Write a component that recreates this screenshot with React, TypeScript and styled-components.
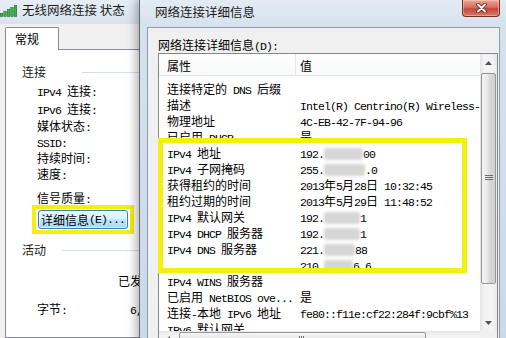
import React from "react";
import styled, { createGlobalStyle } from "styled-components";

const HAN = /[\u3000-\u9fff\uff00-\uffef]/;
const YELLOW = "#f3ef11";

const GlobalStyle = createGlobalStyle`
  html, body {
    margin: 0;
    padding: 0;
  }
  body {
    width: 506px;
    height: 338px;
    overflow: hidden;
    background: #f0f0f0;
    font-family: "Noto Sans CJK SC", sans-serif;
    color: #000;
  }
`;

const Han = styled.span`
  font-family: "Noto Sans CJK SC", sans-serif;
  font-size: 12px;
`;

const Lat = styled.span`
  font-family: "Liberation Mono", monospace;
  font-size: 11.5px;
  letter-spacing: -0.9px;
  white-space: pre;
`;

// SimSun-like mix: latin at 6px per char, han at 12px
function Txt({ text }: { text: string }) {
  const parts = text.split(/([\u3000-\u9fff\uff00-\uffef]+)/).filter(Boolean);
  return (
    <>
      {parts.map((p, i) =>
        HAN.test(p) ? <Han key={i}>{p}</Han> : <Lat key={i}>{p}</Lat>
      )}
    </>
  );
}

const Desktop = styled.main`
  position: relative;
  width: 506px;
  height: 338px;
  overflow: hidden;
  background: #f0f0f0;
`;

/* ---------- window chrome ---------- */

const LeftWindow = styled.section`
  position: absolute;
  left: 0;
  top: 0;
  width: 220px;
  height: 338px;
  display: flex;
  flex-direction: column;
  background: linear-gradient(180deg, #e6edf5 0px, #d9e3ee 24px, #d3dfeb 100%);
`;

const RightWindow = styled.section`
  position: absolute;
  left: 139px;
  top: -1px;
  width: 369px;
  height: 345px;
  box-sizing: border-box;
  border: 1px solid #5b6978;
  padding: 0 7px;
  display: flex;
  flex-direction: column;
  background: linear-gradient(180deg, #e3ebf4 0px, #d6e1ed 27px, #cbd8e6 100%);
  box-shadow: -3px 0 9px rgba(0, 0, 0, 0.3);
`;

const TitleBar = styled.header<{ $height: number }>`
  flex: none;
  height: ${(p) => p.$height}px;
  display: flex;
  align-items: flex-start;
`;

const TitleText = styled.h1<{ $top: number; $left: number }>`
  margin: 0;
  padding: ${(p) => p.$top}px 0 0 ${(p) => p.$left}px;
  font: 400 12.5px/16px "Noto Sans CJK SC", sans-serif;
  color: #1c1c1c;
  white-space: nowrap;
`;

const SignalIcon = styled.svg`
  flex: none;
  margin-top: 5px;
`;

const CloseButton = styled.div`
  margin-left: auto;
  width: 38px;
  height: 17px;
  box-sizing: border-box;
  border: 1px solid #7a2b22;
  border-top: none;
  border-radius: 0 0 4px 4px;
  background: linear-gradient(180deg, #e9a899 0%, #d5705f 45%, #c4483a 55%, #d57a66 100%);
  box-shadow: inset 0 0 0 1px rgba(255, 210, 200, 0.45);
  display: flex;
  align-items: center;
  justify-content: center;
`;

/* ---------- left window: 状态 ---------- */

const LeftClient = styled.div`
  flex: 1;
  background: #f0f0f0;
  padding: 3px 0 0 5px;
  display: flex;
  flex-direction: column;
`;

const Tab = styled.div`
  position: relative;
  z-index: 1;
  width: 54px;
  height: 23px;
  box-sizing: border-box;
  margin-bottom: -1px;
  border: 1px solid #898c95;
  border-bottom: none;
  border-radius: 2px 2px 0 0;
  background: #fff;
  padding-left: 9px;
  font: 12px/22px "Noto Sans CJK SC", sans-serif;
`;

const Panel = styled.div`
  flex: 1;
  border: 1px solid #898c95;
  border-right: none;
  background: #fff;
  padding: 14px 0 0 16px;
  display: flex;
  flex-direction: column;
`;

const GroupHeading = styled.div<{ $gap: number; $lineGap: number }>`
  display: flex;
  align-items: center;
  height: 16px;
  margin-top: ${(p) => p.$gap}px;
  font: 12px/16px "Noto Sans CJK SC", sans-serif;
  color: #1b1b1b;
  &::after {
    content: "";
    flex: 1;
    height: 1px;
    margin-left: ${(p) => p.$lineGap}px;
    background: #d5dfe5;
  }
`;

const InfoRow = styled.div<{ $gap: number; $indent: number }>`
  height: 16px;
  line-height: 16px;
  margin-top: ${(p) => p.$gap}px;
  padding-left: ${(p) => p.$indent}px;
  white-space: nowrap;
`;

const InfoLabel = styled.span<{ $w: number }>`
  display: inline-block;
  width: ${(p) => p.$w}px;
`;

const Highlight = styled.div<{ $gap: number; $indent: number }>`
  align-self: flex-start;
  margin: ${(p) => p.$gap}px 0 0 ${(p) => p.$indent}px;
  border: 4px solid ${YELLOW};
  padding: 1px 2px;
`;

const DetailsButton = styled.button`
  width: 90px;
  height: 19px;
  padding: 0;
  border: 1px solid #3c7fb1;
  border-radius: 3px;
  background: linear-gradient(180deg, #eaf6fd 0%, #d9f0fc 45%, #bee6fd 50%, #a7d9f5 100%);
  box-shadow: inset 0 0 0 1px rgba(255, 255, 255, 0.55);
  display: flex;
  align-items: center;
  justify-content: center;
  line-height: 17px;
  color: #000;
  white-space: nowrap;
`;

/* ---------- right window: 详细信息 ---------- */

const RightClient = styled.div`
  flex: 1;
  border: 1px solid #8d9cab;
  background: #f0f0f0;
  padding: 8px 1px 0 10px;
`;

const ListLabel = styled.div`
  height: 14px;
  line-height: 14px;
  margin-bottom: 3px;
  white-space: nowrap;
`;

const ListView = styled.div`
  position: relative;
  width: 340px;
  height: 296px;
  box-sizing: border-box;
  border: 1px solid #828790;
  background: #fff;
  display: grid;
  grid-template-columns: 321px 17px;
  grid-template-rows: 277px 17px;
`;

const ListContent = styled.div`
  overflow: hidden;
`;

const ListHeader = styled.div`
  display: flex;
  height: 21px;
  border-bottom: 1px solid #e5e5e5;
  background: linear-gradient(180deg, #ffffff, #f8f9fa);
`;

const HeadCell = styled.div<{ $w?: number; $pad: number }>`
  ${(p) => (p.$w ? `width: ${p.$w}px; border-right: 1px solid #e5e5e5;` : "flex: 1;")}
  box-sizing: border-box;
  padding-left: ${(p) => p.$pad}px;
  line-height: 21px;
`;

const ListBody = styled.div`
  padding-top: 3px;
`;

const DetailRow = styled.div`
  display: flex;
  height: 16px;
  line-height: 16px;
  white-space: nowrap;
`;

const Cell = styled.div<{ $w?: number; $pad: number }>`
  ${(p) => (p.$w ? `width: ${p.$w}px; flex: none;` : "flex: 1;")}
  box-sizing: border-box;
  padding-left: ${(p) => p.$pad}px;
`;

const Smudge = styled.span<{ $w: number }>`
  display: inline-block;
  width: ${(p) => p.$w}px;
  height: 12px;
  vertical-align: -2px;
  border-radius: 3px;
  background: #d6d6d6;
  filter: blur(1.8px);
`;

const VScroll = styled.div`
  display: flex;
  flex-direction: column;
  background: linear-gradient(90deg, #e4e4e4 0%, #f3f3f3 25%, #f3f3f3 75%, #e8e8e8 100%);
`;

const HScroll = styled.div`
  display: flex;
  align-items: stretch;
  background: linear-gradient(180deg, #e4e4e4 0%, #f3f3f3 25%, #f3f3f3 75%, #e8e8e8 100%);
`;

const Corner = styled.div`
  background: #f0f0f0;
`;

const ArrowButton = styled.div`
  flex: none;
  width: 17px;
  height: 17px;
  display: flex;
  align-items: center;
  justify-content: center;
`;

const Track = styled.div`
  flex: 1;
  padding: 2px 1px 0;
`;

const Thumb = styled.div<{ $vertical?: boolean; $size: number }>`
  box-sizing: border-box;
  ${(p) =>
    p.$vertical
      ? `height: ${p.$size}px; background: linear-gradient(90deg, #f4f4f4 0%, #e9e9e9 45%, #d9d9d9 55%, #d0d0d0 100%);`
      : `width: ${p.$size}px; margin: 1px 0 0 3px; background: linear-gradient(180deg, #f4f4f4 0%, #e9e9e9 45%, #d9d9d9 55%, #d0d0d0 100%);`}
  border: 1px solid #979797;
  border-radius: 2px;
  display: flex;
  align-items: center;
  justify-content: center;
`;

const Marker = styled.div`
  position: absolute;
  left: -1px;
  top: 84px;
  width: 309px;
  height: 135px;
  box-sizing: border-box;
  border: 5px solid ${YELLOW};
  pointer-events: none;
`;

type Detail = { name: string; value?: string; mask?: number; tail?: string };

const details: Detail[] = [
  { name: "连接特定的 DNS 后缀" },
  { name: "描述", value: "Intel(R) Centrino(R) Wireless-" },
  { name: "物理地址", value: "4C-EB-42-7F-94-96" },
  { name: "已启用 DHCP", value: "是" },
  { name: "IPv4 地址", value: "192.", mask: 39, tail: "00" },
  { name: "IPv4 子网掩码", value: "255.", mask: 41, tail: ".0" },
  { name: "获得租约的时间", value: "2013年5月28日 10:32:45" },
  { name: "租约过期的时间", value: "2013年5月29日 11:48:52" },
  { name: "IPv4 默认网关", value: "192.", mask: 36, tail: "1" },
  { name: "IPv4 DHCP 服务器", value: "192.", mask: 36, tail: "1" },
  { name: "IPv4 DNS 服务器", value: "221.", mask: 31, tail: "88" },
  { name: "", value: "210.", mask: 29, tail: "6.6" },
  { name: "IPv4 WINS 服务器" },
  { name: "已启用 NetBIOS ove...", value: "是" },
  { name: "连接-本地 IPv6 地址", value: "fe80::f11e:cf22:284f:9cbf%13" },
  { name: "IPv6 默认网关" },
];

const connectionRows: [string, number][] = [
  ["IPv4 连接:", 1],
  ["IPv6 连接:", 2],
  ["媒体状态:", 1],
  ["SSID:", 0],
  ["持续时间:", 0],
  ["速度:", 0],
  ["信号质量:", 8],
];

const Arrow = ({ dir }: { dir: "up" | "down" | "left" }) => {
  const pts = {
    up: "0,4 3.5,0 7,4",
    down: "0,0 3.5,4 7,0",
    left: "4,0 0,3.5 4,7",
  }[dir];
  const w = dir === "left" ? 4 : 7;
  const h = dir === "left" ? 7 : 4;
  return (
    <svg width={w} height={h} viewBox={`0 0 ${w} ${h}`}>
      <polygon points={pts} fill="#505050" />
    </svg>
  );
};

const Grip = ({ vertical }: { vertical?: boolean }) => (
  <svg width={vertical ? 8 : 7} height={vertical ? 7 : 8}>
    {[0, 2, 4].map((o) =>
      vertical ? (
        <rect key={o} x={0} y={o} width={8} height={1} fill="#6f6f6f" />
      ) : (
        <rect key={o} x={o} y={0} width={1} height={8} fill="#6f6f6f" />
      )
    )}
  </svg>
);

export default function App() {
  return (
    <Desktop>
      <GlobalStyle />

      <LeftWindow>
        <TitleBar $height={24}>
          <SignalIcon width="18" height="12" viewBox="0 0 18 12">
            {[3, 5, 7, 9, 11].map((h, i) => (
              <rect
                key={i}
                x={i * 3.5 + 0.3}
                y={11.5 - h}
                width={2.4}
                height={h}
                fill="#3fb24a"
                stroke="#1d6b26"
                strokeWidth={0.6}
              />
            ))}
          </SignalIcon>
          <TitleText $top={2} $left={4}>无线网络连接 状态</TitleText>
        </TitleBar>
        <LeftClient>
          <Tab>常规</Tab>
          <Panel>
            <GroupHeading $gap={0} $lineGap={36}>连接</GroupHeading>
            {connectionRows.map(([label, gap]) => (
              <InfoRow key={label} $gap={gap} $indent={15}>
                <Txt text={label} />
              </InfoRow>
            ))}
            <Highlight $gap={1} $indent={10}>
              <DetailsButton>
                <Txt text="详细信息(E)..." />
              </DetailsButton>
            </Highlight>
            <GroupHeading $gap={8} $lineGap={16}>活动</GroupHeading>
            <InfoRow $gap={13} $indent={96}>
              <Txt text="已发送" />
            </InfoRow>
            <InfoRow $gap={12} $indent={15}>
              <InfoLabel $w={93}>
                <Txt text="字节:" />
              </InfoLabel>
              <Txt text="6," />
            </InfoRow>
          </Panel>
        </LeftClient>
      </LeftWindow>

      <RightWindow>
        <TitleBar $height={27}>
          <TitleText $top={4} $left={8}>网络连接详细信息</TitleText>
          <CloseButton>
            <svg width="11" height="10" viewBox="0 0 11 10">
              <path d="M2 1.5 L9 8.5 M9 1.5 L2 8.5" stroke="#5a1d16" strokeWidth="3.6" strokeLinecap="round" />
              <path d="M2 1.5 L9 8.5 M9 1.5 L2 8.5" stroke="#ffffff" strokeWidth="2" strokeLinecap="round" />
            </svg>
          </CloseButton>
        </TitleBar>
        <RightClient>
          <ListLabel>
            <Txt text="网络连接详细信息(D):" />
          </ListLabel>
          <ListView>
            <ListContent>
              <ListHeader>
                <HeadCell $w={137} $pad={8}>
                  <Txt text="属性" />
                </HeadCell>
                <HeadCell $pad={4}>
                  <Txt text="值" />
                </HeadCell>
              </ListHeader>
              <ListBody>
                {details.map((d, i) => (
                  <DetailRow key={i}>
                    <Cell $w={137} $pad={8}>
                      <Txt text={d.name} />
                    </Cell>
                    <Cell $pad={4}>
                      {d.value && <Txt text={d.value} />}
                      {d.mask && <Smudge $w={d.mask} />}
                      {d.tail && <Txt text={d.tail} />}
                    </Cell>
                  </DetailRow>
                ))}
              </ListBody>
            </ListContent>
            <VScroll>
              <ArrowButton>
                <Arrow dir="up" />
              </ArrowButton>
              <Track>
                <Thumb $vertical $size={211}>
                  <Grip vertical />
                </Thumb>
              </Track>
              <ArrowButton>
                <Arrow dir="down" />
              </ArrowButton>
            </VScroll>
            <HScroll>
              <ArrowButton>
                <Arrow dir="left" />
              </ArrowButton>
              <Thumb $size={247}>
                <Grip />
              </Thumb>
            </HScroll>
            <Corner />
            <Marker />
          </ListView>
        </RightClient>
      </RightWindow>
    </Desktop>
  );
}
